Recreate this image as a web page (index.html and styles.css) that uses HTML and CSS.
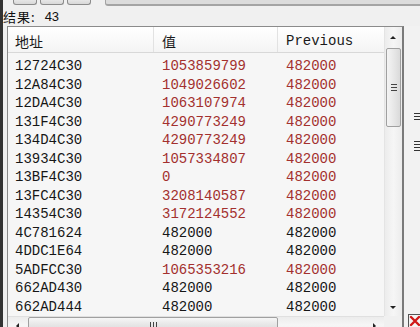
FILE: index.html
```html
<!DOCTYPE html>
<html>
<head>
<meta charset="utf-8">
<link rel="stylesheet" href="styles.css">
</head>
<body>
<div class="edge"></div>
<div class="main">
  <div class="toolbar">
    <div class="tb-btn"></div>
    <div class="tb-btn"></div>
    <div class="tb-btn"></div>
    <div class="tb-box"></div>
  </div>
  <div class="result"><span class="rl">结果:</span><span class="rv">43</span></div>
  <div class="lower">
    <div class="list">
      <div class="table">
        <div class="head">
          <div class="hc c1">地址</div>
          <div class="hc c2">值</div>
          <div class="hc c3">Previous</div>
        </div>
        <div class="rows">
          <div class="row red"><span class="c1">12724C30</span><span class="c2">1053859799</span><span class="c3">482000</span></div>
          <div class="row red"><span class="c1">12A84C30</span><span class="c2">1049026602</span><span class="c3">482000</span></div>
          <div class="row red"><span class="c1">12DA4C30</span><span class="c2">1063107974</span><span class="c3">482000</span></div>
          <div class="row red"><span class="c1">131F4C30</span><span class="c2">4290773249</span><span class="c3">482000</span></div>
          <div class="row red"><span class="c1">134D4C30</span><span class="c2">4290773249</span><span class="c3">482000</span></div>
          <div class="row red"><span class="c1">13934C30</span><span class="c2">1057334807</span><span class="c3">482000</span></div>
          <div class="row red"><span class="c1">13BF4C30</span><span class="c2">0</span><span class="c3">482000</span></div>
          <div class="row red"><span class="c1">13FC4C30</span><span class="c2">3208140587</span><span class="c3">482000</span></div>
          <div class="row red"><span class="c1">14354C30</span><span class="c2">3172124552</span><span class="c3">482000</span></div>
          <div class="row"><span class="c1">4C781624</span><span class="c2">482000</span><span class="c3">482000</span></div>
          <div class="row"><span class="c1">4DDC1E64</span><span class="c2">482000</span><span class="c3">482000</span></div>
          <div class="row red"><span class="c1">5ADFCC30</span><span class="c2">1065353216</span><span class="c3">482000</span></div>
          <div class="row"><span class="c1">662AD430</span><span class="c2">482000</span><span class="c3">482000</span></div>
          <div class="row"><span class="c1">662AD444</span><span class="c2">482000</span><span class="c3">482000</span></div>
        </div>
      </div>
      <div class="vscroll">
        <div class="arrow up"></div>
        <div class="vthumb"><div class="vgrip"></div></div>
        <div class="vtrack"></div>
        <div class="arrow down"></div>
      </div>
      <div class="hscroll">
        <div class="harrow left"></div>
        <div class="hthumb"><div class="hgrip"></div></div>
        <div class="htrack"></div>
        <div class="harrow right"></div>
      </div>
      <div class="corner"></div>
    </div>
    <div class="side">
      <div class="side-marks">
        <div class="mark m1"></div>
        <div class="mark m2"></div>
      </div>
      <div class="side-icon">
        <svg width="14" height="14" viewBox="0 0 14 14">
          <rect x="0.5" y="0.5" width="13" height="13" fill="#f4f4f4" stroke="#555"/>
          <path d="M3 3 L11 11 M11 3 L3 11" stroke="#d01818" stroke-width="2.4" stroke-linecap="round"/>
        </svg>
      </div>
    </div>
  </div>
</div>
</body>
</html>
```

FILE: styles.css
```css
* { box-sizing: border-box; }
html, body { margin: 0; padding: 0; }
body {
  width: 420px;
  height: 327px;
  overflow: hidden;
  background: #f0f0f0;
  display: flex;
  font-family: "Liberation Mono", monospace;
}
.edge { width: 3px; flex: none; background: #333; }
.main { flex: 1; display: flex; flex-direction: column; min-width: 0; }

.toolbar { height: 7px; flex: none; display: flex; gap: 3px; padding-left: 10px; background: #f0f0f0; }
.tb-btn {
  width: 24px; height: 5px;
  border: 1px solid #8c8c8c; border-top: none;
  border-radius: 0 0 3px 3px;
  background: linear-gradient(#e6e6e6, #d8d8d8);
}
.tb-box {
  margin-left: 11px; flex: 1; height: 6px;
  border-bottom: 2px solid #a4a4a4; border-left: 1px solid #a4a4a4;
  border-radius: 0 0 0 3px;
  background: #dcdcdc;
}

.result {
  height: 19px; flex: none;
  display: flex;
  font-family: "Noto Sans CJK SC", "Liberation Sans", sans-serif;
  font-size: 13px; line-height: 20px; color: #111;
}
.rl { letter-spacing: 1px; }
.rv { margin-left: 9px; font-family: "Liberation Sans", sans-serif; font-size: 13px; }

.lower { flex: 1; display: flex; min-height: 0; }
.list {
  margin-left: 4px;
  width: 397px;
  flex: none;
  height: 310px;
  border: 1px solid #8b8b8b;
  border-right: 2px solid #7a7a7a;
  border-bottom: none;
  background: #f6f6f6;
  display: grid;
  grid-template-columns: 1fr 18px;
  grid-template-rows: 289px 17px;
}

.table { overflow: hidden; min-width: 0; }
.head {
  display: flex; height: 26px;
  background: linear-gradient(#ffffff, #f4f4f4);
  border-bottom: 1px solid #d8d8d8;
}
.hc {
  height: 25px; line-height: 25px;
  font-size: 14px; color: #1a1a1a;
  border-right: 1px solid #e2e2e2;
  padding-top: 2px;
}
.head .c1 { font-family: "Noto Sans CJK SC", sans-serif; }
.head .c2 { font-family: "Noto Sans CJK SC", sans-serif; }
.c1 { width: 146px; padding-left: 7px; flex: none; }
.c2 { width: 124px; padding-left: 8px; flex: none; }
.c3 { flex: 1; padding-left: 8px; border-right: none; }

.rows { padding-top: 4px; }
.row {
  display: flex; height: 18.5px; line-height: 18.5px;
  font-size: 14px; color: #161616; white-space: nowrap;
}
.row span { display: block; }
.row.red .c2, .row.red .c3 { color: #a3302e; }

.vscroll {
  display: flex; flex-direction: column;
  background: linear-gradient(90deg, #ececec, #f6f6f6 50%, #ececec);
  border-left: 1px solid #e4e4e4;
}
.arrow { height: 19px; flex: none; position: relative; }
.arrow::after {
  content: ""; position: absolute; left: 5px;
  border-left: 3px solid transparent; border-right: 3px solid transparent;
}
.arrow.up::after { top: 9px; border-bottom: 3px solid #222; }
.arrow.down::after { top: 10px; border-top: 3px solid #222; }
.vthumb {
  margin: 2px 1px 0 1px; height: 79px; flex: none;
  border: 1px solid #a0a0a0; border-radius: 2px;
  background: linear-gradient(90deg, #f4f4f4, #e8e8e8 50%, #dadada);
  display: flex; align-items: center; justify-content: center;
}
.vgrip {
  width: 6px; height: 7px;
  background: repeating-linear-gradient(#444 0 1px, transparent 1px 3px);
}
.vtrack { flex: 1; }
.arrow.down { height: 20px; }

.hscroll {
  display: flex; align-items: flex-start;
  background: linear-gradient(#ececec, #f6f6f6 50%, #ececec);
  border-top: 1px solid #e0e0e0;
}
.harrow { width: 19px; height: 16px; flex: none; position: relative; }
.harrow::after {
  content: ""; position: absolute; top: 6px;
  border-top: 3px solid transparent; border-bottom: 3px solid transparent;
}
.harrow.left::after { left: 8px; border-right: 3px solid #222; }
.harrow.right::after { left: 8px; border-left: 3px solid #222; }
.hthumb {
  width: 250px; height: 16px; margin-left: 1px; flex: none;
  border: 1px solid #a0a0a0; border-radius: 2px;
  background: linear-gradient(#f6f6f6, #e6e6e6 50%, #dadada);
  display: flex; align-items: flex-start; justify-content: center;
  padding-top: 4px;
}
.hgrip {
  width: 7px; height: 6px;
  background: repeating-linear-gradient(90deg, #444 0 1px, transparent 1px 3px);
}
.htrack { flex: 1; }
.corner { background: #f0f0f0; }

.side { flex: 1; position: relative; overflow: hidden; background: #f2f2f2; }
.side-marks {
  display: flex; flex-direction: column; gap: 20px;
  margin-left: 10px; margin-top: 87px;
}
.mark {
  width: 6px; height: 8px;
  background: repeating-linear-gradient(#333 0 1px, transparent 1px 3px);
}
.m2 { height: 10px; }
.side-icon { position: absolute; left: 4px; top: 288px; width: 14px; height: 14px; }
.side-icon svg { display: block; }
```
